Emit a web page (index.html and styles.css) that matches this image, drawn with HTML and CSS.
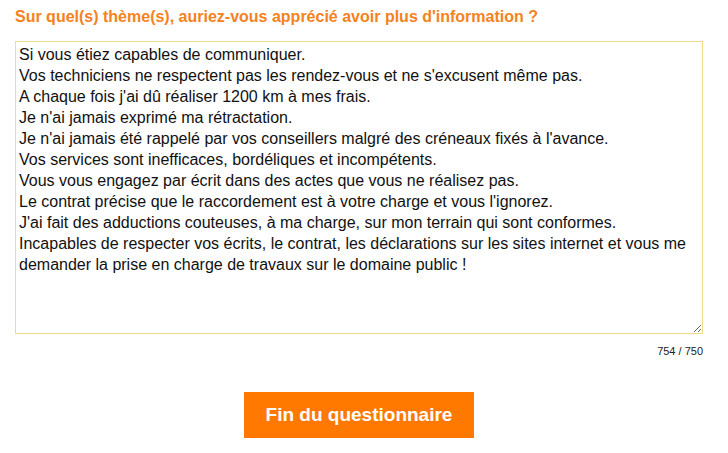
FILE: index.html
```html
<!DOCTYPE html>
<html lang="fr">
<head>
<meta charset="utf-8">
<link rel="stylesheet" href="styles.css">
</head>
<body>
<div class="page">
  <h2 class="question">Sur quel(s) thème(s), auriez-vous apprécié avoir plus d'information ?</h2>
  <textarea class="answer">Si vous étiez capables de communiquer.
Vos techniciens ne respectent pas les rendez-vous et ne s'excusent même pas.
A chaque fois j'ai dû réaliser 1200 km à mes frais.
Je n'ai jamais exprimé ma rétractation.
Je n'ai jamais été rappelé par vos conseillers malgré des créneaux fixés à l'avance.
Vos services sont inefficaces, bordéliques et incompétents.
Vous vous engagez par écrit dans des actes que vous ne réalisez pas.
Le contrat précise que le raccordement est à votre charge et vous l'ignorez.
J'ai fait des adductions couteuses, à ma charge, sur mon terrain qui sont conformes.
Incapables de respecter vos écrits, le contrat, les déclarations sur les sites internet et vous me demander la prise en charge de travaux sur le domaine public !</textarea>
  <div class="counter">754 / 750</div>
  <div class="actions">
    <button class="finish">Fin du questionnaire</button>
  </div>
</div>
</body>
</html>
```
FILE: styles.css
```css
html, body {
  margin: 0;
  padding: 0;
  background: #fff;
}
.page {
  padding: 8px 25px 0 15px;
  font-family: "Liberation Sans", Arial, sans-serif;
}
.question {
  margin: 0;
  font-size: 16px;
  line-height: 18px;
  font-weight: bold;
  color: #f58220;
}
.answer {
  display: block;
  box-sizing: border-box;
  margin-top: 15px;
  width: 688px;
  height: 293px;
  padding: 2px 3px;
  border: 1px solid #f3dc86;
  border-radius: 0;
  font-family: "Liberation Sans", Arial, sans-serif;
  font-size: 16px;
  line-height: 21px;
  color: #111;
  resize: vertical;
  outline: none;
}
.counter {
  width: 688px;
  text-align: right;
  font-size: 11px;
  color: #222;
  margin-top: 11px;
}
.actions {
  width: 688px;
  display: flex;
  justify-content: center;
  margin-top: 35px;
}
.finish {
  width: 230px;
  height: 46px;
  background: #ff7900;
  color: #fff;
  border: none;
  border-radius: 0;
  font-family: "Liberation Sans", Arial, sans-serif;
  font-weight: bold;
  font-size: 19px;
  margin-left: 0;
}
```
